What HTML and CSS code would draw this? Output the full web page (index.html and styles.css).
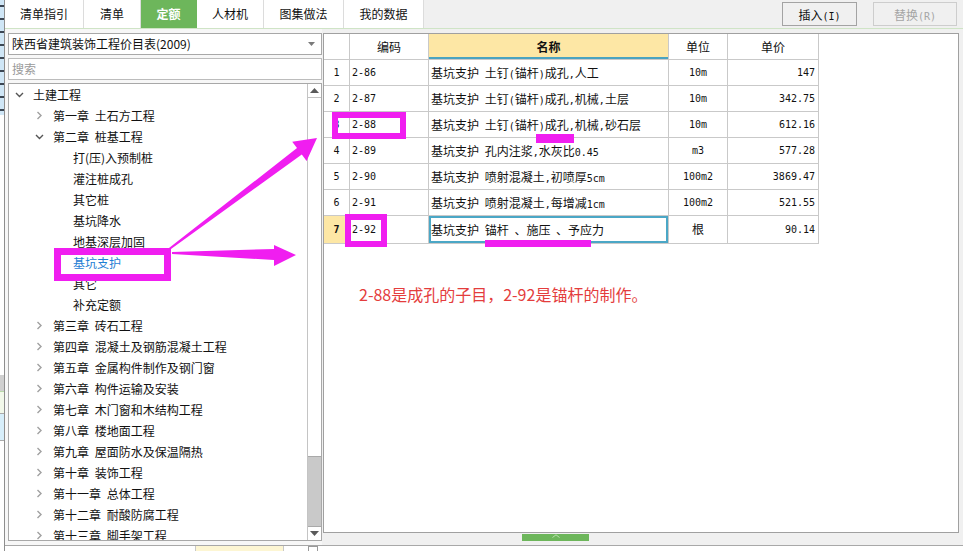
FILE: index.html
```html
<!DOCTYPE html>
<html lang="zh-CN">
<head>
<meta charset="utf-8">
<title>定额</title>
<link rel="stylesheet" href="styles.css">
</head>
<body>
<div class="app">
  <div class="edge">
    <div class="edge-top"></div>
    <div class="edge-white"></div>
    <div class="edge-gray"></div>
    <div class="edge-green"></div>
    <div class="edge-blue"></div>
    <div class="edge-rest"></div>
  </div>
  <div class="main">
    <div class="topbar">
      <div class="tabs">
        <div class="tab t1">清单指引</div>
        <div class="tab t2">清单</div>
        <div class="tab t3 active">定额</div>
        <div class="tab t4">人材机</div>
        <div class="tab t5">图集做法</div>
        <div class="tab t6">我的数据</div>
      </div>
      <div class="actions">
        <button class="btn btn1">插入<span class="m">(I)</span></button>
        <button class="btn btn2">替换<span class="m">(R)</span></button>
      </div>
    </div>
    <div class="content">
      <div class="leftpanel">
        <div class="select">
          <span>陕西省建筑装饰工程价目表(2009)</span>
          <svg class="select-arrow" width="7" height="4" viewBox="0 0 7 4"><polygon points="0,0 7,0 3.5,4" fill="#7a7a7a"/></svg>
        </div>
        <div class="search">搜索</div>
        <div class="treebox">
          <div class="tree">
            <div class="node l0"><span class="chev"><svg width="9" height="6" viewBox="0 0 9 6"><polyline points="1,1 4.5,4.5 8,1" fill="none" stroke="#555" stroke-width="1.4"/></svg></span>土建工程</div>
            <div class="node l1"><span class="chev"><svg width="9" height="9" viewBox="0 0 9 9"><polyline points="2.5,1 6,4.5 2.5,8" fill="none" stroke="#a0a0a0" stroke-width="1.4"/></svg></span>第一章 土石方工程</div>
            <div class="node l1"><span class="chev"><svg width="9" height="6" viewBox="0 0 9 6"><polyline points="1,1 4.5,4.5 8,1" fill="none" stroke="#555" stroke-width="1.4"/></svg></span>第二章 桩基工程</div>
            <div class="node l2">打(压)入预制桩</div>
            <div class="node l2">灌注桩成孔</div>
            <div class="node l2">其它桩</div>
            <div class="node l2">基坑降水</div>
            <div class="node l2">地基深层加固</div>
            <div class="node l2 sel">基坑支护</div>
            <div class="node l2">其它</div>
            <div class="node l2">补充定额</div>
            <div class="node l1"><span class="chev"><svg width="9" height="9" viewBox="0 0 9 9"><polyline points="2.5,1 6,4.5 2.5,8" fill="none" stroke="#a0a0a0" stroke-width="1.4"/></svg></span>第三章 砖石工程</div>
            <div class="node l1"><span class="chev"><svg width="9" height="9" viewBox="0 0 9 9"><polyline points="2.5,1 6,4.5 2.5,8" fill="none" stroke="#a0a0a0" stroke-width="1.4"/></svg></span>第四章 混凝土及钢筋混凝土工程</div>
            <div class="node l1"><span class="chev"><svg width="9" height="9" viewBox="0 0 9 9"><polyline points="2.5,1 6,4.5 2.5,8" fill="none" stroke="#a0a0a0" stroke-width="1.4"/></svg></span>第五章 金属构件制作及钢门窗</div>
            <div class="node l1"><span class="chev"><svg width="9" height="9" viewBox="0 0 9 9"><polyline points="2.5,1 6,4.5 2.5,8" fill="none" stroke="#a0a0a0" stroke-width="1.4"/></svg></span>第六章 构件运输及安装</div>
            <div class="node l1"><span class="chev"><svg width="9" height="9" viewBox="0 0 9 9"><polyline points="2.5,1 6,4.5 2.5,8" fill="none" stroke="#a0a0a0" stroke-width="1.4"/></svg></span>第七章 木门窗和木结构工程</div>
            <div class="node l1"><span class="chev"><svg width="9" height="9" viewBox="0 0 9 9"><polyline points="2.5,1 6,4.5 2.5,8" fill="none" stroke="#a0a0a0" stroke-width="1.4"/></svg></span>第八章 楼地面工程</div>
            <div class="node l1"><span class="chev"><svg width="9" height="9" viewBox="0 0 9 9"><polyline points="2.5,1 6,4.5 2.5,8" fill="none" stroke="#a0a0a0" stroke-width="1.4"/></svg></span>第九章 屋面防水及保温隔热</div>
            <div class="node l1"><span class="chev"><svg width="9" height="9" viewBox="0 0 9 9"><polyline points="2.5,1 6,4.5 2.5,8" fill="none" stroke="#a0a0a0" stroke-width="1.4"/></svg></span>第十章 装饰工程</div>
            <div class="node l1"><span class="chev"><svg width="9" height="9" viewBox="0 0 9 9"><polyline points="2.5,1 6,4.5 2.5,8" fill="none" stroke="#a0a0a0" stroke-width="1.4"/></svg></span>第十一章 总体工程</div>
            <div class="node l1"><span class="chev"><svg width="9" height="9" viewBox="0 0 9 9"><polyline points="2.5,1 6,4.5 2.5,8" fill="none" stroke="#a0a0a0" stroke-width="1.4"/></svg></span>第十二章 耐酸防腐工程</div>
            <div class="node l1"><span class="chev"><svg width="9" height="9" viewBox="0 0 9 9"><polyline points="2.5,1 6,4.5 2.5,8" fill="none" stroke="#a0a0a0" stroke-width="1.4"/></svg></span>第十三章 脚手架工程</div>
          </div>
          <div class="vscroll">
            <div class="sb-btn sb-up"><svg width="9" height="5" viewBox="0 0 9 5"><polygon points="0,5 9,5 4.5,0" fill="#5a5a5a"/></svg></div>
            <div class="sb-thumb"></div>
            <div class="sb-track"></div>
            <div class="sb-btn sb-down"><svg width="9" height="5" viewBox="0 0 9 5"><polygon points="0,0 9,0 4.5,5" fill="#5a5a5a"/></svg></div>
          </div>
        </div>
      </div>
      <div class="gridpane">
        <div class="gridbox">
          <table class="grid">
            <thead>
              <tr>
                <th class="c1"></th>
                <th class="c2">编码</th>
                <th class="c3 hname">名称</th>
                <th class="c4">单位</th>
                <th class="c5">单价</th>
              </tr>
            </thead>
            <tbody>
              <tr>
                <td class="num">1</td><td class="code">2-86</td>
                <td class="name">基坑支护 土钉<span class="m">(</span>锚杆<span class="m">)</span>成孔<span class="m">,</span>人工</td>
                <td class="unit">10m</td><td class="price">147</td>
              </tr>
              <tr>
                <td class="num">2</td><td class="code">2-87</td>
                <td class="name">基坑支护 土钉<span class="m">(</span>锚杆<span class="m">)</span>成孔<span class="m">,</span>机械<span class="m">,</span>土层</td>
                <td class="unit">10m</td><td class="price">342.75</td>
              </tr>
              <tr>
                <td class="num">3</td><td class="code">2-88</td>
                <td class="name">基坑支护 土钉<span class="m">(</span>锚杆<span class="m">)</span>成孔<span class="m">,</span>机械<span class="m">,</span>砂石层</td>
                <td class="unit">10m</td><td class="price">612.16</td>
              </tr>
              <tr>
                <td class="num">4</td><td class="code">2-89</td>
                <td class="name">基坑支护 孔内注浆<span class="m">,</span>水灰比<span class="m">0.45</span></td>
                <td class="unit">m3</td><td class="price">577.28</td>
              </tr>
              <tr>
                <td class="num">5</td><td class="code">2-90</td>
                <td class="name">基坑支护 喷射混凝土<span class="m">,</span>初喷厚<span class="m">5cm</span></td>
                <td class="unit">100m2</td><td class="price">3869.47</td>
              </tr>
              <tr>
                <td class="num">6</td><td class="code">2-91</td>
                <td class="name">基坑支护 喷射混凝土<span class="m">,</span>每增减<span class="m">1cm</span></td>
                <td class="unit">100m2</td><td class="price">521.55</td>
              </tr>
              <tr class="cur">
                <td class="num">7</td><td class="code">2-92</td>
                <td class="name">基坑支护 锚杆 、施压 、予应力</td>
                <td class="unit"><span class="cj">根</span></td><td class="price">90.14</td>
              </tr>
            </tbody>
          </table>
          <p class="note">2-88是成孔的子目，2-92是锚杆的制作。</p>
        </div>
        <div class="splitter">
          <div class="handle"><svg width="8" height="4" viewBox="0 0 8 4"><polyline points="0.5,3.5 4,0.8 7.5,3.5" fill="none" stroke="#b9e0ae" stroke-width="1"/></svg></div>
        </div>
      </div>
    </div>
    <div class="bottom">
      <div class="yb"></div>
      <div class="sq"></div>
    </div>
  </div>
  <svg class="annot" width="963" height="551" viewBox="0 0 963 551">
    <g fill="none" stroke="#f01ef0">
      <rect x="57.5" y="251.5" width="110" height="26" stroke-width="7"/>
      <rect x="335" y="115" width="68" height="21" stroke-width="6"/>
      <rect x="348" y="217" width="36" height="27" stroke-width="6"/>
    </g>
    <g fill="#f01ef0">
      <rect x="536" y="134" width="38" height="9"/>
      <rect x="485" y="240" width="106" height="7"/>
      <polygon points="167.4,249.2 297.0,148.1 292.2,141.7 317,138 306.6,160.9 301.8,154.5 168.6,250.8"/>
      <polygon points="172,252 274,249 274,245 296,255 274,266 274,260 172,254"/>
    </g>
  </svg>
</div>
</body>
</html>
```

FILE: styles.css
```css
* { box-sizing: border-box; }
html, body { margin: 0; padding: 0; }
body {
  width: 963px;
  height: 551px;
  overflow: hidden;
  background: #f0f0f0;
  font-family: "Noto Sans CJK SC", "Microsoft YaHei", sans-serif;
  font-size: 12px;
  color: #111;
}
.app {
  position: relative;
  width: 963px;
  height: 551px;
  display: flex;
  overflow: hidden;
}

/* left window edge (background window peeking through) */
.edge {
  width: 5px;
  flex: none;
  border-right: 1px solid #8e8e8e;
  background: #fff;
  display: flex;
  flex-direction: column;
}
.edge-top {
  height: 115px;
  background: repeating-linear-gradient(to bottom, #cfe6f6 0 5px, #3b4653 5px 7px, #cfe6f6 7px 13px);
}
.edge-white { height: 260px; background: #fff; }
.edge-gray { height: 16px; background: #cfcfcf; }
.edge-green { height: 22px; background: #f2f8ea; border-top: 1px solid #b8d8a8; }
.edge-blue { height: 28px; background: #d7eefa; border-top: 1px solid #aaa; border-bottom: 1px solid #aaa; }
.edge-rest { flex: 1; background: #fff; }

.main {
  flex: 1;
  min-width: 0;
  display: flex;
  flex-direction: column;
}

/* top tab bar */
.topbar {
  height: 29px;
  flex: none;
  display: flex;
  align-items: flex-start;
  background: #f0f0f0;
  border-bottom: 1px solid #cfe4c6;
}
.tabs { display: flex; height: 28px; background: #fff; }
.tab {
  height: 28px;
  line-height: 28px;
  text-align: center;
  border-right: 1px solid #dcdcdc;
  font-size: 12px;
  color: #111;
}
.t1 { width: 79px; }
.t2 { width: 57px; }
.t3 { width: 56px; }
.t4 { width: 67px; }
.t5 { width: 80px; }
.t6 { width: 80px; }
.tab.active {
  background: #6db65b;
  color: #fff;
  font-weight: bold;
  border-right-color: #6db65b;
}
.actions {
  margin-left: auto;
  margin-right: 6px;
  padding-top: 2px;
  display: flex;
  gap: 16px;
}
.btn {
  height: 24px;
  padding: 0;
  border: 1px solid #a3a3a3;
  background: #f0f0f0;
  font-family: "Noto Sans CJK SC", sans-serif;
  font-size: 12px;
  color: #111;
}
.btn1 { width: 75px; }
.btn2 { width: 84px; color: #a5a5a5; border-color: #cdcdcd; }

.m {
  font-family: "DejaVu Sans Mono", "Liberation Mono", monospace;
  font-size: 10px;
  line-height: 1;
}

/* content */
.content {
  height: 516px;
  flex: none;
  display: flex;
}
.leftpanel {
  width: 317px;
  flex: none;
  padding: 4px 0 4px 3px;
  display: flex;
  flex-direction: column;
  gap: 3px;
  background: #f7f7f7;
}
.select {
  height: 22px;
  flex: none;
  border: 1px solid #a8a8a8;
  background: #fff;
  display: flex;
  align-items: center;
  padding-left: 3px;
  line-height: 20px;
}
.select-arrow { margin-left: auto; margin-right: 6px; }
.search {
  height: 22px;
  flex: none;
  border: 1px solid #bcbcbc;
  background: #fff;
  color: #9a9a9a;
  padding-left: 3px;
  line-height: 20px;
}
.treebox {
  flex: 1;
  min-height: 0;
  border: 1px solid #a8a8a8;
  background: #fff;
  display: flex;
}
.tree { flex: 1; overflow: hidden; }
.node {
  height: 21px;
  line-height: 21px;
  display: flex;
  align-items: center;
  white-space: nowrap;
  word-spacing: 3px;
  color: #111;
}
.l0 { padding-left: 6px; }
.l1 { padding-left: 26px; }
.l2 { padding-left: 64px; }
.chev { width: 18px; flex: none; display: flex; align-items: center; }
.node.sel { color: #1f80d4; }

.vscroll {
  width: 14px;
  flex: none;
  border-left: 1px solid #c4c4c4;
  display: flex;
  flex-direction: column;
  background: #fff;
}
.sb-btn {
  height: 14px;
  flex: none;
  display: flex;
  align-items: center;
  justify-content: center;
  background: #fff;
}
.sb-up { border-bottom: 1px solid #c2c2c2; }
.sb-down { border-top: 1px solid #a9a9a9; }
.sb-thumb { height: 359px; flex: none; border-bottom: 1px solid #a9a9a9; background: #fff; }
.sb-track { flex: 1; background: #c9c9c9; }

/* grid */
.gridpane {
  flex: 1;
  min-width: 0;
  display: flex;
  flex-direction: column;
  padding: 4px 4px 0 1px;
  background: #f0f0f0;
}
.gridbox {
  height: 500px;
  flex: none;
  border: 1px solid #a0a0a0;
  background: #fff;
  overflow: hidden;
}
.grid {
  border-collapse: separate;
  border-spacing: 0;
  table-layout: fixed;
  width: 495px;
}
.grid th, .grid td {
  height: 26px;
  box-sizing: border-box;
  padding: 0;
  border-right: 1px solid #c9c9c9;
  border-bottom: 1px solid #c9c9c9;
  white-space: nowrap;
  overflow: hidden;
  line-height: 25px;
  font-size: 12px;
  font-weight: normal;
  color: #111;
}
.grid th { text-align: center; }
.c1 { width: 26px; }
.c2 { width: 79px; }
.c3 { width: 240px; }
.c4 { width: 59px; }
.c5 { width: 91px; }
.grid th.hname {
  background: #fde7a5;
  font-weight: bold;
  box-shadow: inset 0 -2px 0 #4aa3c0;
}
.grid td.num, .grid td.code, .grid td.unit, .grid td.price {
  font-family: "DejaVu Sans Mono", "Liberation Mono", monospace;
  font-size: 10px;
}
.grid td.num { text-align: center; }
.grid td.code { padding-left: 2px; }
.grid td.name { padding-left: 2px; word-spacing: 3px; }
.grid td.unit { text-align: center; }
.grid td.price { text-align: right; padding-right: 3px; }
.cj { font-family: "Noto Sans CJK SC", sans-serif; font-size: 12px; }
.grid tr.cur td.num { background: #fde7a5; font-weight: bold; }
.grid tr.cur td.name { box-shadow: inset 0 0 0 2px #4ba7c6; }

.note {
  margin: 40px 0 0 35px;
  font-size: 16px;
  line-height: 20px;
  color: #e43d3d;
}

.splitter {
  flex: 1;
  background: #f0f0f0;
  padding-left: 199px;
}
.handle {
  width: 67px;
  height: 7px;
  margin-top: 1px;
  background: #6db65b;
  display: flex;
  justify-content: center;
  align-items: flex-start;
}

.bottom {
  height: 6px;
  flex: none;
  border-top: 1px solid #a8a8a8;
  background: #fff;
  display: flex;
}
.bottom .yb {
  margin-left: 190px;
  width: 89px;
  background: #fdf6d3;
  border-left: 1px solid #c8c8c8;
  border-right: 1px solid #c8c8c8;
}
.bottom .sq {
  margin-left: 24px;
  width: 10px;
  border: 1px solid #9a9a9a;
  border-bottom: none;
}

.annot {
  position: absolute;
  left: 0;
  top: 0;
  pointer-events: none;
}
```
